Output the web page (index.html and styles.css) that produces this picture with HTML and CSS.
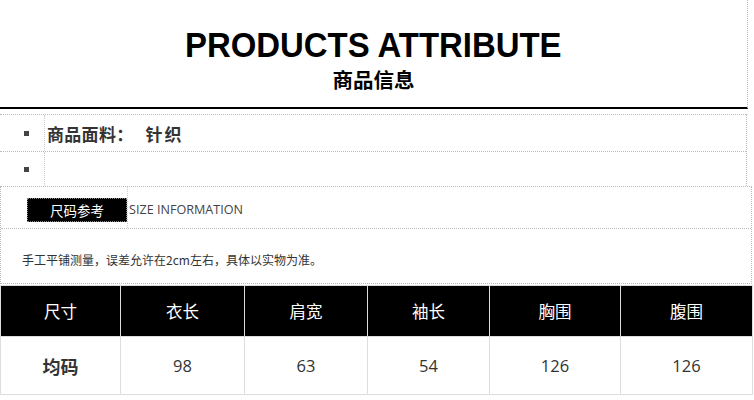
FILE: index.html
```html
<!DOCTYPE html>
<html lang="zh">
<head>
<meta charset="utf-8">
<link rel="stylesheet" href="styles.css">
</head>
<body>
<div class="page">
  <header class="head">
    <h1 class="title"><span class="title-text">PRODUCTS ATTRIBUTE</span></h1>
    <h2 class="subtitle">商品信息</h2>
  </header>
  <ul class="attrs">
    <li class="attr"><span class="bullet-cell"><i class="bullet"></i></span><span class="attr-text">商品面料：<span class="attr-value">针织</span></span></li>
    <li class="attr attr-empty"><span class="bullet-cell"><i class="bullet"></i></span><span class="attr-text"></span></li>
  </ul>
  <section class="size">
    <div class="size-head">
      <div class="label-cell"><span class="label">尺码参考</span></div>
      <span class="size-en">SIZE INFORMATION</span>
    </div>
    <p class="note">手工平铺测量，误差允许在2cm左右，具体以实物为准。</p>
  </section>
  <table class="grid">
    <colgroup>
      <col class="c1"><col class="c2"><col class="c3"><col class="c4"><col class="c5"><col class="c6">
    </colgroup>
    <thead>
      <tr><th>尺寸</th><th>衣长</th><th>肩宽</th><th>袖长</th><th>胸围</th><th>腹围</th></tr>
    </thead>
    <tbody>
      <tr><td class="rowname">均码</td><td>98</td><td>63</td><td>54</td><td>126</td><td>126</td></tr>
    </tbody>
  </table>
</div>
</body>
</html>
```
FILE: styles.css
```css
* { box-sizing: border-box; }
html, body { margin: 0; padding: 0; background: #fff; }
body { font-family: "Noto Sans CJK SC", "Noto Sans", sans-serif; color: #333; }
.page { width: 754px; }

.head {
  width: 748px;
  height: 109px;
  border-right: 1px dotted #bbb;
  border-bottom: 2px solid #000;
  text-align: center;
  padding-top: 25px;
}
.title {
  margin: 0;
  font-family: "Liberation Sans", Arial, sans-serif;
  font-weight: bold;
  font-size: 35px;
  line-height: 40px;
  color: #000;
}
.title-text {
  display: inline-block;
  transform: scaleX(0.94);
}
.subtitle {
  margin: 0;
  padding-top: 1px;
  font-family: "Noto Sans CJK SC", sans-serif;
  font-weight: bold;
  font-size: 20.5px;
  line-height: 26px;
  color: #000;
}

.attrs {
  list-style: none;
  margin: 5px 0 0;
  padding: 0;
  width: 747px;
  border-right: 1px dotted #bbb;
}
.attr {
  display: flex;
  height: 37px;
  border-top: 1px dotted #bbb;
}
.attr-empty { height: 35px; }
.bullet-cell {
  width: 45px;
  border-right: 1px dotted #ccc;
  display: flex;
  align-items: center;
  padding-left: 24px;
}
.bullet {
  display: block;
  width: 5px;
  height: 5px;
  background: #444;
}
.attr-text {
  display: flex;
  align-items: center;
  padding-left: 2px;
  font-size: 17px;
  font-weight: bold;
  color: #333;
  letter-spacing: 0.3px;
}
.attr-value {
  margin-left: 12px;
  letter-spacing: 2px;
}

.size {
  width: 752px;
  border: 1px dotted #bbb;
}
.size-head {
  display: flex;
  align-items: stretch;
  height: 42px;
  border-bottom: 1px dotted #bbb;
}
.label-cell {
  width: 127px;
  border-right: 1px dotted #ccc;
  padding: 11px 0 0 26px;
}
.label {
  display: block;
  width: 100px;
  height: 24px;
  background: #000;
  border: 1px dotted #888;
  color: #fff;
  font-size: 13.5px;
  line-height: 22px;
  text-align: center;
}
.size-en {
  padding-top: 14px;
  font-family: "Open Sans", "Noto Sans", sans-serif;
  font-size: 12.6px;
  line-height: 18px;
  color: #444;
  padding-left: 1px;
}
.note {
  margin: 0;
  height: 54px;
  padding: 23px 0 0 21px;
  font-size: 12px;
  line-height: 16px;
  color: #333;
}

.grid {
  width: 752px;
  table-layout: fixed;
  border-collapse: collapse;
  margin-top: 1px;
}
.c1 { width: 120px; }
.c2 { width: 124px; }
.c3 { width: 123px; }
.c4 { width: 122px; }
.c5 { width: 131px; }
.c6 { width: 132px; }
.grid th, .grid td {
  border: 1px solid #ddd;
  text-align: center;
  padding: 0;
}
.grid th {
  background: #000;
  color: #fff;
  height: 51px;
  font-size: 16.5px;
  font-weight: normal;
}
.grid td {
  height: 58px;
  font-family: "Open Sans", "Noto Sans", sans-serif;
  font-size: 16.5px;
  color: #333;
}
.grid td.rowname {
  font-family: "Noto Sans CJK SC", sans-serif;
  font-weight: bold;
  font-size: 18px;
}
```
